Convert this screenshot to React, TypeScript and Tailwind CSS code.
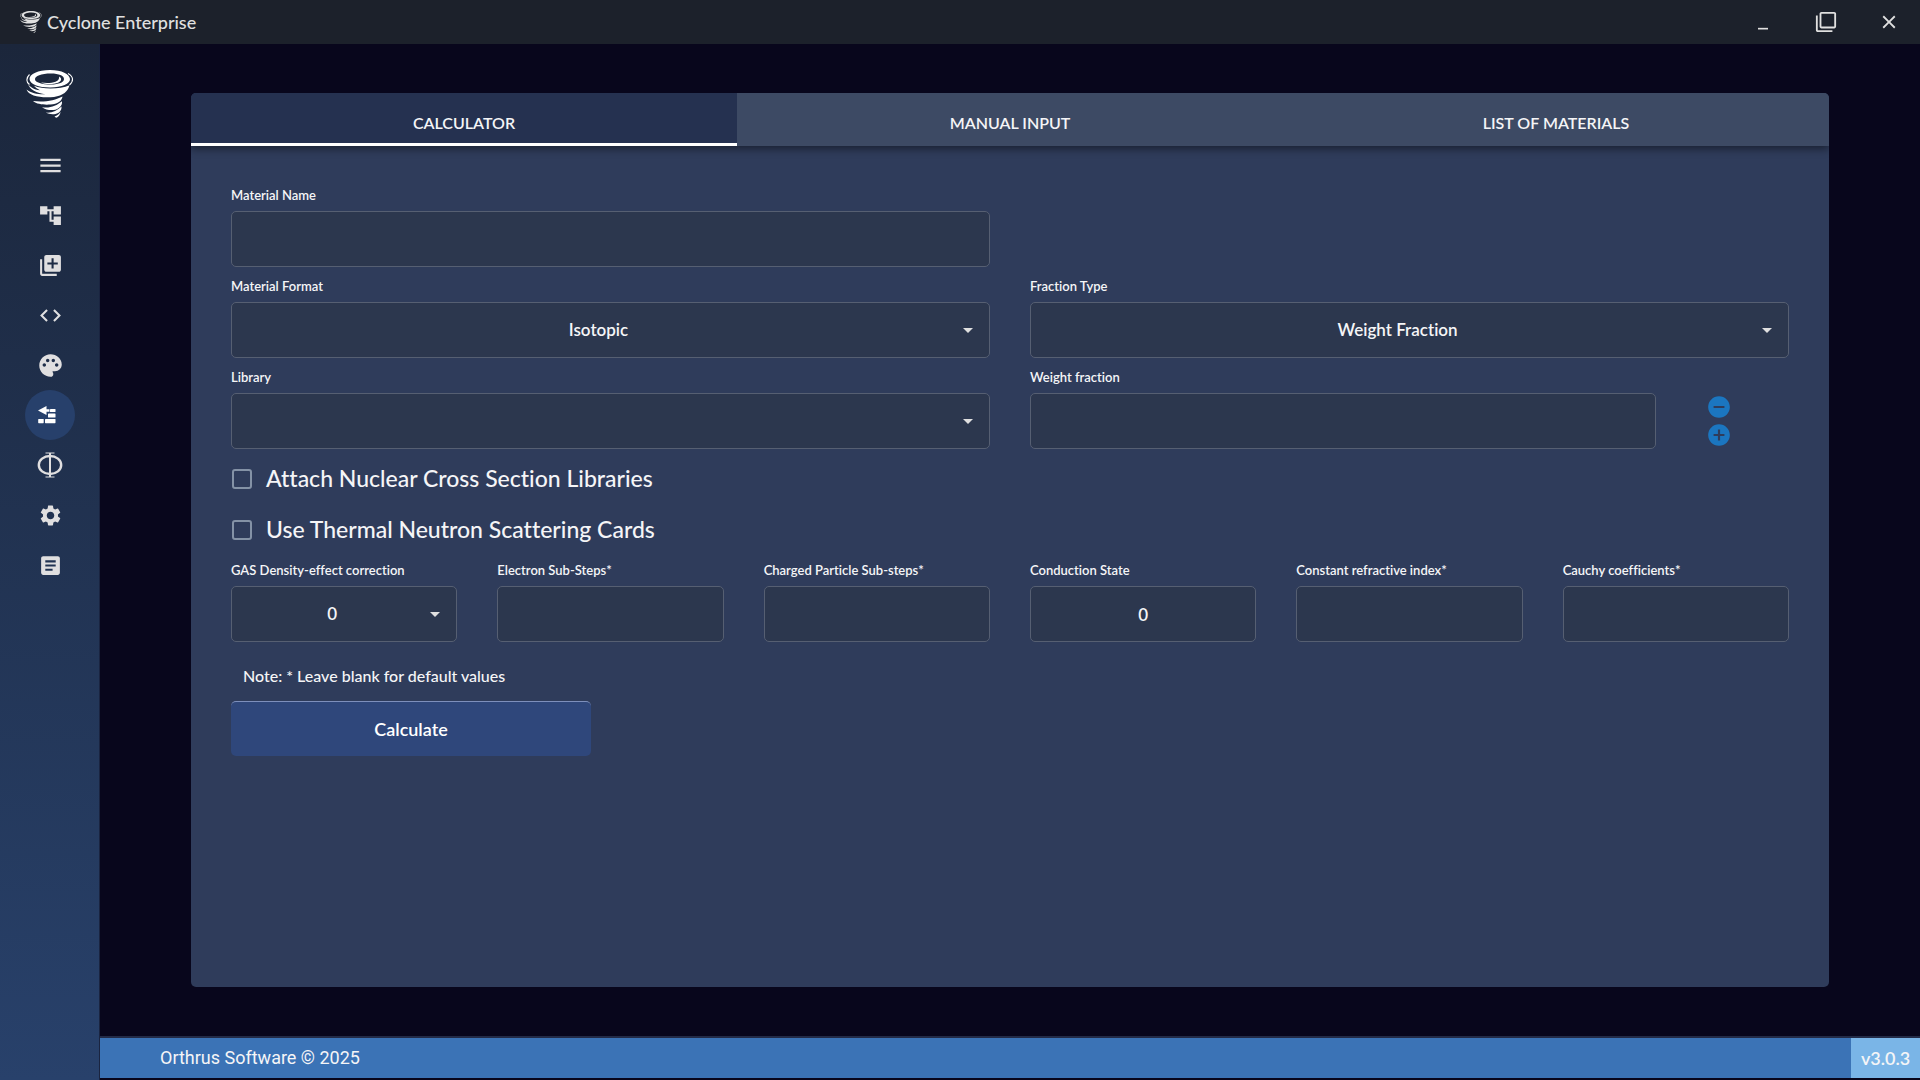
import { useId, useState } from 'react';
import type { ReactNode } from 'react';
import {
  MdAccountTree,
  MdAddCircle,
  MdArticle,
  MdClose,
  MdCode,
  MdFilterNone,
  MdLibraryAdd,
  MdMenu,
  MdMinimize,
  MdPalette,
  MdRemoveCircle,
  MdSettings,
} from 'react-icons/md';

const boxClass =
  'h-14 w-full rounded-[5px] border border-[#565f72] bg-[#2c374e] text-center text-[17px] font-semibold outline-none focus:border-[#90a4c8]';

function CycloneLogo({ className }: { className?: string }) {
  return (
    <svg viewBox="0 0 48 48" className={className} fill="currentColor" aria-hidden="true">
      <path
        fillRule="evenodd"
        d="M24 0C36 0 43.500 4 44 9c.3 4.500-8 8.500-20 8.500C13 17.500 3.500 14 3.500 9 3.500 4 12 0 24 0Zm1 3.500C15 3.500 9 6 9 9.200c0 3.200 7 5.300 16 5.300 8 0 13-2.300 13-5.500 0-3.200-5-5.500-13-5.500Z"
      />
      <path d="M33 6.500c3 1.500 3 4.500-1 6.200-5 2-13 1.800-17-.2 5 .8 11 .6 14.500-.8 3-1.200 4-3 3.500-5.200Z" />
      <path
        d="M3.500 4.500C0 8 0 12 3.500 14.500M42 3.500c5.500 3 6 7.500 1.500 11.500"
        fill="none"
        stroke="currentColor"
        strokeWidth="1.100"
      />
      <path d="M2 13c1 4 6 6.500 12 7.300-3-1.800-5-3-6-4.500 9 3.800 26 3.600 35.500-.6-1.500 6-6.500 10.500-15.500 11.700C16 28.500 2.500 26 .5 19.500c5 4 12 5 19 4.700C11 23 3 20 2 13Z" />
      <path d="M7 31c11 1.500 22-.5 29.500-4.500-.5 4.500-5 7.500-12 8C19 35 11 34.500 7 31Z" />
      <path d="M16 37.200c8 1.300 14.500-1.500 20-6 .5 4.500-3 8-8.500 8.800-4.500.3-8.500-.6-11.500-2.800Z" />
      <path d="M20 42.600c6 .6 11-1.800 15.500-6 .3 4-2 6.500-6 7.300-3.500.6-7 .1-9.500-1.300Z" />
      <path d="M28.500 46.500c2.500-.5 4.500-2.200 6-4.700-.3 3-1.500 4.700-3.500 5.700-1 .4-1.800-.2-2.500-1Z" />
    </svg>
  );
}

function BricksIcon() {
  return (
    <svg viewBox="0 0 24 24" className="mr-[7px] h-6 w-6" fill="currentColor" aria-hidden="true">
      <path d="M3 7.500 11.500 3v3.300h3v2.400h-3V12L3 7.500Z" />
      <rect x="15" y="6" width="5.500" height="3" rx=".6" />
      <rect x="13" y="10.500" width="7.500" height="4" rx=".6" />
      <rect x="3.200" y="16" width="5.500" height="4.200" rx=".6" />
      <rect x="10" y="16" width="10.500" height="4.200" rx=".6" />
    </svg>
  );
}

function PhiIcon() {
  return (
    <svg viewBox="0 0 26 26" className="h-[26px] w-[26px]" fill="none" stroke="currentColor" aria-hidden="true">
      <ellipse cx="13" cy="13" rx="11.200" ry="9" strokeWidth="2.400" />
      <path d="M13 1v24" strokeWidth="2" />
      <path d="M8.500 1h9M8.500 25h9" strokeWidth="1.200" />
    </svg>
  );
}

function SideButton({ label, active, children }: { label: string; active?: boolean; children: ReactNode }) {
  return (
    <button
      type="button"
      aria-label={label}
      className={`flex h-[50px] w-[50px] items-center justify-center rounded-full ${
        active ? 'bg-[#27406b] text-white' : 'text-[#e0dfe0] hover:bg-white/5'
      }`}
    >
      {children}
    </button>
  );
}

function Field({ label, children }: { label: string; children: (id: string) => ReactNode }) {
  const id = useId();
  return (
    <div>
      <label htmlFor={id} className="mb-2 block text-[13px] leading-4 font-semibold whitespace-nowrap">
        {label}
      </label>
      {children(id)}
    </div>
  );
}

function TextField({ label, defaultValue }: { label: string; defaultValue?: string }) {
  return (
    <Field label={label}>
      {(id) => <input id={id} type="text" defaultValue={defaultValue} className={`${boxClass} px-3`} />}
    </Field>
  );
}

function SelectField({ label, options }: { label: string; options: string[] }) {
  return (
    <Field label={label}>
      {(id) => (
        <div className="relative">
          <select id={id} className={`${boxClass} appearance-none pr-8 pl-2`}>
            {options.map((option) => (
              <option key={option}>{option}</option>
            ))}
          </select>
          <svg
            viewBox="0 0 10 5"
            className="pointer-events-none absolute top-[26px] right-[17px] h-[5px] w-[10px] fill-[#e0e0e0]"
            aria-hidden="true"
          >
            <path d="M0 0h10L5 5Z" />
          </svg>
        </div>
      )}
    </Field>
  );
}

function CheckRow({ label }: { label: string }) {
  return (
    <label className="flex h-[51px] w-fit items-center gap-[14px] pl-px text-[23px] font-medium">
      <input
        type="checkbox"
        className="h-5 w-5 appearance-none rounded-[3px] border-2 border-[#8492a6] checked:bg-[#8492a6]"
      />
      {label}
    </label>
  );
}

const tabs = ['CALCULATOR', 'MANUAL INPUT', 'LIST OF MATERIALS'];

export default function App() {
  const [tab, setTab] = useState(tabs[0]);

  return (
    <div className="flex min-h-screen flex-col bg-[#08061c] font-['Lato',sans-serif] text-[#f5f5f7] [font-variant-ligatures:none]">
      <header className="flex h-11 items-center justify-between bg-[#1c212b] pr-[19px] pl-5 text-[#e0e0e0]">
        <div className="flex items-center gap-[5px]">
          <CycloneLogo className="h-[22px] w-[22px]" />
          <span className="text-[18px] leading-6 font-medium">Cyclone Enterprise</span>
        </div>
        <div className="flex items-center gap-[39px]">
          <button type="button" aria-label="Minimize" className="flex w-6 justify-center">
            <MdMinimize size={20} />
          </button>
          <button type="button" aria-label="Maximize" className="flex w-6 justify-center">
            <MdFilterNone size={22} />
          </button>
          <button type="button" aria-label="Close" className="flex w-6 justify-center">
            <MdClose size={22} />
          </button>
        </div>
      </header>

      <div className="flex flex-1">
        <nav className="flex w-[100px] flex-col items-center bg-linear-to-b from-[#1b263b] to-[#28416b] pt-[26px] shadow-[inset_-1px_0_0_#1a2440]">
          <CycloneLogo className="mb-[22px] h-12 w-12 text-white" />
          <SideButton label="Menu">
            <MdMenu size={27} />
          </SideButton>
          <SideButton label="Geometry tree">
            <MdAccountTree size={25} />
          </SideButton>
          <SideButton label="Add card">
            <MdLibraryAdd size={25} />
          </SideButton>
          <SideButton label="Code">
            <MdCode size={25} />
          </SideButton>
          <SideButton label="Colors">
            <MdPalette size={27} />
          </SideButton>
          <SideButton label="Materials" active>
            <BricksIcon />
          </SideButton>
          <SideButton label="Flux">
            <PhiIcon />
          </SideButton>
          <SideButton label="Settings">
            <MdSettings size={25} />
          </SideButton>
          <SideButton label="Output">
            <MdArticle size={25} />
          </SideButton>
        </nav>

        <div className="flex flex-1 flex-col">
          <main className="flex flex-1 justify-center py-[49px]">
            <section className="flex w-9/10 flex-col overflow-hidden rounded-[5px] bg-[#2f3c5b]">
              <div role="tablist" className="z-10 grid grid-cols-3 shadow-[0_3px_8px_rgba(0,0,0,0.45)]">
                {tabs.map((name) => (
                  <button
                    key={name}
                    type="button"
                    role="tab"
                    aria-selected={tab === name}
                    onClick={() => setTab(name)}
                    className={`h-[53px] border-b-[3px] pt-[10px] text-[16px] font-semibold ${
                      tab === name ? 'border-white bg-[#253150]' : 'border-transparent bg-[#3d4a64]'
                    }`}
                  >
                    {name}
                  </button>
                ))}
              </div>

              <form className="px-10 pt-[41px]" onSubmit={(e) => e.preventDefault()}>
                <div className="grid grid-cols-2 gap-x-10 gap-y-[11px]">
                  <TextField label="Material Name" />
                  <div className="col-start-1">
                    <SelectField label="Material Format" options={['Isotopic', 'Elemental']} />
                  </div>
                  <SelectField label="Fraction Type" options={['Weight Fraction', 'Atomic Fraction']} />
                  <SelectField label="Library" options={['']} />
                  <div className="flex">
                    <div className="flex-1">
                      <TextField label="Weight fraction" />
                    </div>
                    <div className="flex w-[133px] flex-col items-center gap-0.5 pt-[25px] pr-2 text-[#1b76c0]">
                      <button type="button" aria-label="Remove fraction">
                        <MdRemoveCircle size={26} />
                      </button>
                      <button type="button" aria-label="Add fraction">
                        <MdAddCircle size={26} />
                      </button>
                    </div>
                  </div>
                </div>

                <div className="mt-1 mb-[7px]">
                  <CheckRow label="Attach Nuclear Cross Section Libraries" />
                  <CheckRow label="Use Thermal Neutron Scattering Cards" />
                </div>

                <div className="grid grid-cols-6 gap-10">
                  <SelectField label="GAS Density-effect correction" options={['0', '1']} />
                  <TextField label="Electron Sub-Steps*" />
                  <TextField label="Charged Particle Sub-steps*" />
                  <TextField label="Conduction State" defaultValue="0" />
                  <TextField label="Constant refractive index*" />
                  <TextField label="Cauchy coefficients*" />
                </div>

                <p className="mt-6 mb-[15px] pl-3 text-[16px] leading-5 font-medium">
                  Note: * Leave blank for default values
                </p>
                <button
                  type="submit"
                  className="h-[55px] w-[360px] rounded-[5px] border-t border-[#7d8fbb] bg-[#2f477b] text-[18px] font-semibold text-white hover:bg-[#385490]"
                >
                  Calculate
                </button>
              </form>
            </section>
          </main>

          <footer className="mb-0.5 flex h-[42px] items-center justify-between border-t-2 border-[#232b47] bg-[#3b73b6] pl-[60px]">
            <span className="font-['Roboto',sans-serif] text-lg">Orthrus Software © 2025</span>
            <span className="flex h-full w-[69px] items-center justify-center bg-[#7ab5e7] text-[18px] font-semibold">
              v3.0.3
            </span>
          </footer>
        </div>
      </div>
    </div>
  );
}
